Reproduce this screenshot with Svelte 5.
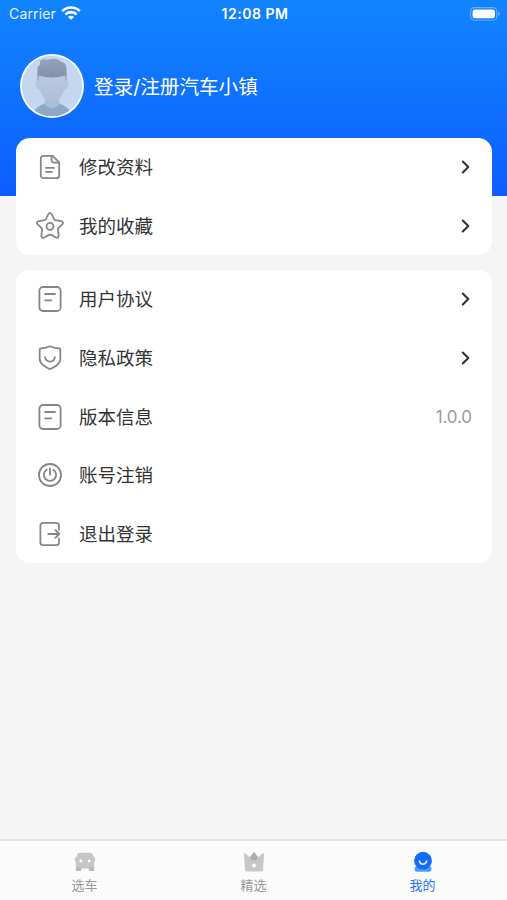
<script>
  const groups = [
    [
      { icon: 'doc', label: '修改资料', arrow: true },
      { icon: 'star', label: '我的收藏', arrow: true }
    ],
    [
      { icon: 'note', label: '用户协议', arrow: true },
      { icon: 'shield', label: '隐私政策', arrow: true },
      { icon: 'note', label: '版本信息', value: '1.0.0' },
      { icon: 'power', label: '账号注销' },
      { icon: 'exit', label: '退出登录' }
    ]
  ];
  const tabs = [
    { icon: 'car', label: '选车' },
    { icon: 'crown', label: '精选' },
    { icon: 'me', label: '我的', active: true }
  ];
</script>

<div class="page">
  <header>
    <div class="status">
      <div class="carrier">
        <span>Carrier</span>
        <svg width="20" height="14" viewBox="0 0 20 14" fill="none" stroke="#fff" stroke-width="2.6">
          <path d="M1.2 5.2a12.4 12.4 0 0 1 17.6 0" />
          <path d="M4.4 8.5a7.9 7.9 0 0 1 11.2 0" />
          <path d="M10 13.8L7 10.9a4.2 4.2 0 0 1 6 0Z" fill="#fff" stroke="none" />
        </svg>
      </div>
      <span class="time">12:08 PM</span>
      <svg class="battery" width="31" height="14" viewBox="0 0 31 14">
        <rect x=".6" y=".6" width="26.2" height="12.6" rx="3.8" fill="none" stroke="#fff" stroke-opacity=".35" stroke-width="1.1" />
        <rect x="2.6" y="2.5" width="22.3" height="8.8" rx="2.2" fill="#fff" />
        <path d="M28.3 4.8q3 2.1 0 4.2z" fill="#fff" fill-opacity=".45" />
      </svg>
    </div>
    <div class="user">
      <svg class="avatar" width="64" height="64" viewBox="0 0 64 64">
        <defs>
          <clipPath id="face"><circle cx="32" cy="32" r="30.2" /></clipPath>
          <linearGradient id="hair" x1="0" y1="0" x2="0" y2="1">
            <stop offset="0" stop-color="#94a2b9" /><stop offset="1" stop-color="#7f8da8" />
          </linearGradient>
          <linearGradient id="skin" x1="0" y1="0" x2="0" y2="1">
            <stop offset="0" stop-color="#bccbe1" /><stop offset="1" stop-color="#adbed8" />
          </linearGradient>
          <linearGradient id="shirt" x1="0" y1="0" x2="0" y2="1">
            <stop offset="0" stop-color="#90a9c6" /><stop offset="1" stop-color="#89a9c5" />
          </linearGradient>
        </defs>
        <circle cx="32" cy="32" r="32" fill="#f5faff" />
        <g clip-path="url(#face)">
          <rect width="64" height="64" fill="#c5d7f0" />
          <path d="M11 64q1-9 13-14.5h16q12 5.5 13 14.5z" fill="url(#shirt)" />
          <path d="M25 41h14v8q1 3-7 5.5-8-2.500-7-5.500z" fill="#aabcd6" />
          <path d="M17.500 27q-3-.5-2 4 1 4.500 4 4.500 2 7 7 11.500 5.500 3 11 0 5-4.500 7-11.500 3 0 4-4.500 1-4.500-2-4V16h-29z" fill="url(#skin)" />
          <path d="M17.500 28V14q.5-2.500 3-3.500l-1-4q3 .5 4-2 2 2 5 1 9-2 12 2 5.500 1 6 6.500v14l-1.500-6.500q-13 4-26 0z" fill="url(#hair)" />
        </g>
      </svg>
      <span class="login">登录/注册汽车小镇</span>
    </div>
  </header>

  <main>
    {#each groups as rows}
      <section class="card">
        {#each rows as row}
          <div class="row">
            <svg class="ico" width="28" height="28" viewBox="0 0 28 28">
              {#if row.icon === 'doc'}
                <path d="M16.700 2.900H7.500a2.700 2.700 0 0 0-2.700 2.700v16.800a2.700 2.700 0 0 0 2.700 2.700h13a2.700 2.700 0 0 0 2.700-2.700V9.300zM15.600 3.100v4.200a2.400 2.400 0 0 0 2.400 2.400h5M10 14.900h8M10 18.900h6" />
              {:else if row.icon === 'star'}
                <path d="M12.400 2.200Q14-.4 15.600 2.200L18.200 7.300Q18.600 8 19.400 8.200L25.200 9.200Q28.200 9.900 26.300 12.300L22.400 16.200Q21.700 16.900 21.900 17.900L22.700 23.300Q22.700 26.600 19.700 25.500L15.200 22.900Q14 22.300 12.800 22.900L8.300 25.500Q5.300 26.600 5.300 23.300L6.100 17.900Q6.300 16.900 5.600 16.200L1.700 12.300Q-.2 9.900 2.800 9.200L8.600 8.200Q9.400 8 9.800 7.300Z" />
                <circle cx="14" cy="14.300" r="3.500" />
              {:else if row.icon === 'note'}
                <rect x="3.400" y="2" width="21.200" height="24" rx="3.600" />
                <path d="M9.100 9H19M9.100 15.300h6.200" />
              {:else if row.icon === 'shield'}
                <path d="M14 2.300q4.800 2.100 9.200 2.100 1.100.1 1.100 1.200v9.200q0 3.500-3.200 6.200-3.400 2.600-7.100 4.200-3.700-1.600-7.100-4.200-3.200-2.700-3.200-6.200V5.600q0-1.100 1.100-1.200 4.400 0 9.200-2.100zM9.100 13.200q.7 4.400 4.900 4.400t4.900-4.400" />
              {:else if row.icon === 'power'}
                <circle cx="14" cy="14" r="11" />
                <path d="M14 7.300v6.400M10.700 8.700a6.100 6.100 0 1 0 6.600 0" />
              {:else}
                <path d="M23 9.600V5.500a2.600 2.600 0 0 0-2.600-2.600H7a2.600 2.600 0 0 0-2.600 2.600v17A2.600 2.600 0 0 0 7 25.100h13.400a2.600 2.600 0 0 0 2.600-2.600v-4.200M12.300 14H23M19.400 10.200l3.800 3.800-3.800 3.800" />
              {/if}
            </svg>
            <span class="label">{row.label}</span>
            {#if row.value}<span class="value">{row.value}</span>{/if}
            {#if row.arrow}
              <svg class="arrow" width="10" height="14" viewBox="0 0 10 14"><path d="M1.800 1.600L7.300 7l-5.500 5.400" /></svg>
            {/if}
          </div>
        {/each}
      </section>
    {/each}
  </main>

  <nav>
    {#each tabs as tab}
      <div class="tab" class:active={tab.active}>
        <svg width="24" height="24" viewBox="0 0 24 24">
          {#if tab.icon === 'car'}
            <path d="M7 2.800h10q2.500 0 3 2.200l.6 2.200 1.600.7v3l-1 .8v8.200q0 1-1 1h-3.500q-1 0-1-1v-1.500H8.300v1.500q0 1-1 1H3.800q-1 0-1-1v-8.200l-1-.8v-3l1.600-.7L4 5q.5-2.200 3-2.200z" fill="#c6c6c6" />
            <path d="M3.300 17.300h4.600v3.600H3.300zM16 17.300h4.700v3.600H16z" fill="#b8b8b8" />
            <circle cx="7.800" cy="11" r="1.400" fill="#fff" /><circle cx="16.200" cy="11" r="1.400" fill="#fff" />
          {:else if tab.icon === 'crown'}
            <path d="M2 4.500q-.2-2 1.500-1l5 4.200h7l5-4.200q1.700-1 1.500 1L21 19.800q0 1.700-2 1.700H5q-2 0-2-1.700z" fill="#c7c7c7" />
            <path d="M12 1.700l4 5.300q-1 3.500-4 3.500T8 7z" fill="#adadad" />
            <circle cx="12" cy="15.500" r="2" fill="#fff" />
          {:else}
            <rect x="3.600" y="16.200" width="16.800" height="5.500" rx="2.300" fill="#46a0fc" />
            <circle cx="12" cy="10.700" r="8.900" fill="#126aff" />
            <path d="M8.400 11.100q.7 3.100 3.600 3.100t3.600-3.100" fill="none" stroke="#e1f0ff" stroke-width="1.600" stroke-linecap="round" />
          {/if}
        </svg>
        <span>{tab.label}</span>
      </div>
    {/each}
  </nav>
</div>

<style>
  :global(body) { margin: 0; }
  .page {
    width: 507px;
    height: 900px;
    display: flex;
    flex-direction: column;
    overflow: hidden;
    background: #f5f5f5;
    font-family: Inter, "Noto Sans CJK SC", sans-serif;
  }
  header {
    height: 196px;
    flex: none;
    color: #fff;
    background: linear-gradient(180deg, #1284ff 0%, #0c5eff 100%);
  }
  .status {
    height: 27px;
    padding: 0 6px 0 9px;
    display: grid;
    grid-template-columns: 1fr auto 1fr;
    align-items: center;
    font-size: 14px;
  }
  .carrier { display: flex; align-items: center; gap: 5px; color: #e2f0ff; letter-spacing: .15px; }
  .carrier svg { margin-top: -1px; }
  .time { font-size: 14px; font-weight: 600; letter-spacing: .55px; }
  .battery { justify-self: end; }
  .user { display: flex; align-items: center; gap: 10px; padding: 27px 0 0 20px; }
  .avatar { flex: none; }
  .login { font-size: 19.6px; line-height: 28px; padding-top: 2px; }
  main {
    flex: 1;
    margin-top: -58px;
    padding: 0 15px 0 16px;
    display: flex;
    flex-direction: column;
    gap: 15px;
  }
  .card { background: #fff; border-radius: 14px; }
  .row { height: 58.6px; display: flex; align-items: center; padding: 0 20px; }
  .ico {
    flex: none;
    fill: none;
    stroke: #868686;
    stroke-width: 1.8;
    stroke-linecap: round;
    stroke-linejoin: round;
  }
  .label { margin-left: 15px; font-size: 18.5px; color: #333; flex: 1; line-height: 28px; }
  .value { font-size: 17px; color: #9b9b9b; letter-spacing: -.1px; }
  .arrow { fill: none; stroke: #333; stroke-width: 2.1; stroke-linecap: round; stroke-linejoin: round; margin-right: 1.5px; }
  nav {
    height: 59px;
    flex: none;
    display: flex;
    background: #fbfbfb;
    border-top: 2px solid #e2e2e2;
  }
  .tab {
    flex: 1;
    display: flex;
    flex-direction: column;
    align-items: center;
    padding-top: 9px;
    font-size: 13px;
    line-height: 20px;
    color: #999;
  }
  .tab span { margin-top: 1px; }
  .tab.active { color: #2474ff; }
</style>
